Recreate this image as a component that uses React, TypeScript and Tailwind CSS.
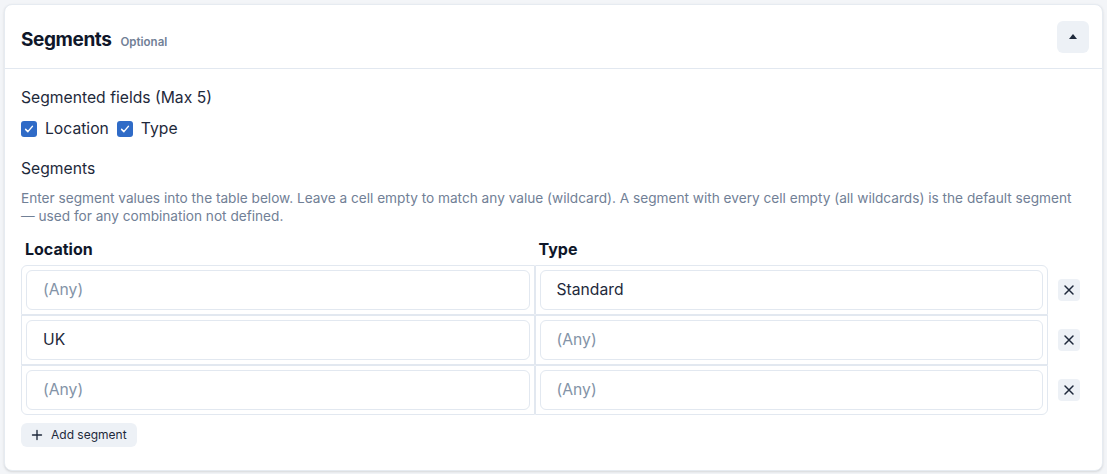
import React from 'react';

const rows = [
    { location: '', type: 'Standard' },
    { location: 'UK', type: '' },
    { location: '', type: '' },
];

const Check = () => (
    <span className="flex h-4 w-4 items-center justify-center rounded-[3px] bg-[#2f6bc7]">
        <svg viewBox="0 0 16 16" className="h-3 w-3" fill="none" stroke="white" strokeWidth="2" strokeLinecap="round" strokeLinejoin="round">
            <path d="M3.5 8.5l3 3 6-7" />
        </svg>
    </span>
);

const Cell = ({ value, className }: { value: string; className?: string }) => (
    <div className={`flex-1 border border-[#e2e8f0] p-1 ${className ?? ''}`}>
        <div className="flex h-10 items-center rounded-md border border-[#e2e8f0] px-4 text-[15.7px]">
            {value ? <span className="text-[#1e293b]">{value}</span> : <span className="text-[#8393a7]">(Any)</span>}
        </div>
    </div>
);

export default function App(): React.JSX.Element {
    return (
        <div className="min-h-screen bg-[#f3f5f8] p-[4px] font-['Inter',sans-serif]">
            <div className="rounded-lg border border-[#e6ebf1] bg-white shadow-sm">
                <div className="flex h-16 items-center justify-between border-b border-[#e2e8f0] pl-4 pr-[13px]">
                    <div className="flex items-baseline gap-[9px] pt-[7px]">
                        <h2 className="text-[19px] font-bold tracking-[-0.4px] text-[#0f172a]">Segments</h2>
                        <span className="text-[11.5px] font-semibold text-[#718096]">Optional</span>
                    </div>
                    <button className="flex h-8 w-8 items-center justify-center rounded-md bg-[#edf1f6]">
                        <svg viewBox="0 0 10 6" className="h-[5px] w-[8px]" fill="#1e293b">
                            <path d="M5 0L10 6H0z" />
                        </svg>
                    </button>
                </div>

                <div className="pb-[23px] pl-4 pr-4 pt-[18px] text-[#1e293b]">
                    <p className="text-[15.7px] leading-[22px]">Segmented fields (Max 5)</p>
                    <div className="mt-[9px] flex h-[22px] items-center gap-2 text-[15.7px]">
                        <label className="flex items-center gap-2"><Check /> Location</label>
                        <label className="flex items-center gap-2"><Check /> Type</label>
                    </div>

                    <p className="mt-[18px] text-[15.7px] leading-[22px]">Segments</p>
                    <p className="mt-[9px] text-[13.65px] leading-[18px] text-[#718096]">
                        Enter segment values into the table below. Leave a cell empty to match any value (wildcard). A segment with every cell empty (all wildcards) is the default segment<br />
                        — used for any combination not defined.
                    </p>

                    <div className="mt-[13px] flex pr-[38px] text-[16px] font-bold leading-[22px] text-[#0f172a]">
                        <div className="flex-1 pl-1">Location</div>
                        <div className="flex-1 pl-1">Type</div>
                    </div>

                    <div className="mt-[5px] flex flex-col">
                        {rows.map((r, i) => (
                            <div key={i} className="flex items-center">
                                <div className="flex flex-1">
                                    <Cell
                                        value={r.location}
                                        className={`${i === 0 ? 'rounded-tl-md' : ''} ${i === rows.length - 1 ? 'rounded-bl-md' : ''}`}
                                    />
                                    <Cell
                                        value={r.type}
                                        className={`${i === 0 ? 'rounded-tr-md' : ''} ${i === rows.length - 1 ? 'rounded-br-md' : ''}`}
                                    />
                                </div>
                                <div className="flex w-[38px] pl-[10px]">
                                    <button className="flex h-[22px] w-[22px] items-center justify-center rounded bg-[#edf1f6]">
                                        <svg viewBox="0 0 16 16" className="h-4 w-4" fill="none" stroke="#1e293b" strokeWidth="1.5" strokeLinecap="round">
                                            <path d="M4 4l8 8M12 4l-8 8" />
                                        </svg>
                                    </button>
                                </div>
                            </div>
                        ))}
                    </div>

                    <button className="mt-2 flex h-6 items-center gap-2 rounded-md bg-[#edf1f6] px-[10px] text-[12px] text-[#1e293b]">
                        <svg viewBox="0 0 16 16" className="h-3 w-3" fill="none" stroke="#1e293b" strokeWidth="1.8" strokeLinecap="round">
                            <path d="M8 2v12M2 8h12" />
                        </svg>
                        Add segment
                    </button>
                </div>
            </div>
        </div>
    );
}
